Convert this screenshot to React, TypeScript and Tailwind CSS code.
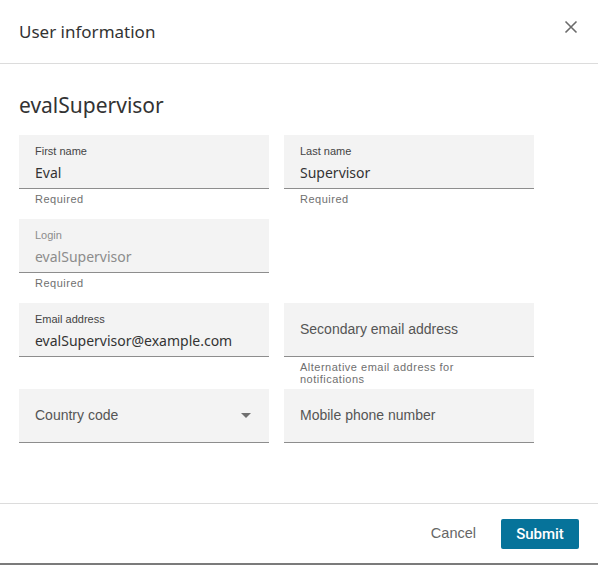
import React from "react";

const EMBER = { fontFamily: '"Noto Sans", "Open Sans", sans-serif' };
const ARIAL = { fontFamily: '"Liberation Sans", Arial, sans-serif' };
const ROBOTO = { fontFamily: 'Roboto, "Liberation Sans", sans-serif' };

type FieldProps = {
  label?: string;
  value?: string;
  placeholder?: string;
  helper?: string[];
  disabled?: boolean;
  select?: boolean;
};

function Field({ label, value, placeholder, helper, disabled, select }: FieldProps) {
  return (
    <div className="flex flex-col">
      <div className="relative h-[54px] bg-[#f3f3f3] border-b border-[#8d8d8d] px-4 box-border">
        {label ? (
          <div className="flex flex-col">
            <div
              className={`pt-[10px] text-[11px] leading-[13px] ${disabled ? "text-[#8c8c8c]" : "text-[#444]"}`}
              style={ARIAL}
            >
              {label}
            </div>
            <div
              className={`pt-[6px] text-[14px] leading-[18px] ${disabled ? "text-[#8c8c8c]" : "text-[#333]"}`}
              style={EMBER}
            >
              {value}
            </div>
          </div>
        ) : (
          <div className="flex h-full items-center justify-between">
            <span className="text-[14px] text-[#555]" style={ARIAL}>
              {placeholder}
            </span>
            {select && (
              <svg width="10" height="5" viewBox="0 0 10 5" className="mr-[2px]">
                <path d="M0 0 L10 0 L5 5 Z" fill="#707070" />
              </svg>
            )}
          </div>
        )}
      </div>
      <div
        className="min-h-[30px] pt-[4px] pb-[4px] px-4 text-[11px] leading-[12px] tracking-[0.5px] text-[#6f6f6f]"
        style={ARIAL}
      >
        {helper?.map((h) => (
          <div key={h}>{h}</div>
        ))}
      </div>
    </div>
  );
}

export default function App() {
  return (
    <div className="w-[598px] h-[565px] bg-white flex flex-col">
      <div className="h-[64px] shrink-0 border-b border-[#dcdcdc] flex items-center justify-between pl-[19px] pr-[20px] box-border">
        <span className="text-[17px] text-[#333]" style={EMBER}>
          User information
        </span>
        <svg width="14" height="14" viewBox="0 0 14 14" className="-mt-[10px]">
          <path d="M1.5 1.5 L12.5 12.5 M12.5 1.5 L1.5 12.5" stroke="#6b6b6b" strokeWidth="1.6" />
        </svg>
      </div>
      <div className="flex-1 px-[19px]">
        <div className="pt-[27px] pb-[16px] text-[21px] leading-[28px] text-[#333]" style={EMBER}>
          evalSupervisor
        </div>
        <div className="grid grid-cols-[250px_250px] gap-x-[15px]">
          <Field label="First name" value="Eval" helper={["Required"]} />
          <Field label="Last name" value="Supervisor" helper={["Required"]} />
          <Field label="Login" value="evalSupervisor" helper={["Required"]} disabled />
          <div />
          <Field label="Email address" value="evalSupervisor@example.com" />
          <Field
            placeholder="Secondary email address"
            helper={["Alternative email address for", "notifications"]}
          />
          <Field placeholder="Country code" select />
          <Field placeholder="Mobile phone number" />
        </div>
      </div>
      <div className="h-[62px] shrink-0 border-t border-[#dcdcdc] border-b-2 border-b-[#7b7b7b] box-border flex items-start justify-end pt-[15px] pr-[19px]">
        <button className="h-[30px] px-[12px] mr-[13px] text-[14.5px] text-[#666]" style={ARIAL}>
          Cancel
        </button>
        <button
          className="h-[30px] w-[78px] rounded-[2px] bg-[#06739a] text-white text-[15px] font-medium"
          style={ROBOTO}
        >
          Submit
        </button>
      </div>
    </div>
  );
}
